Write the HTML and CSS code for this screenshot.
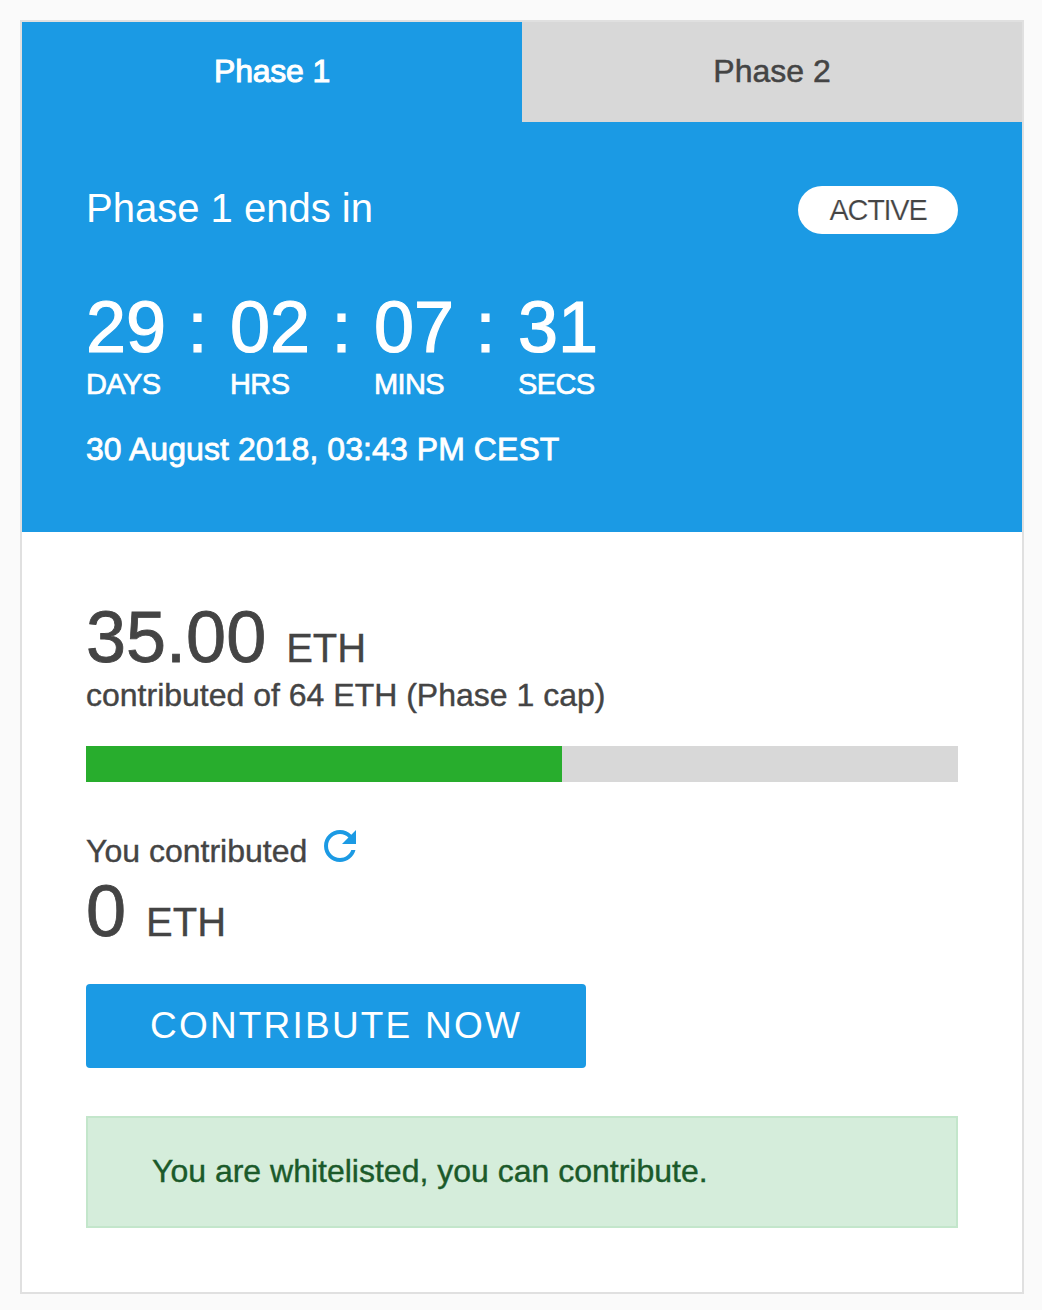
FILE: index.html
```html
<!DOCTYPE html>
<html lang="en">
<head>
  <meta charset="utf-8">
  <title>Contribution</title>
  <link rel="stylesheet" href="styles.css">
</head>
<body>
  <main class="card">
    <nav class="tabs">
      <a class="tab tab-active">Phase 1</a>
      <a class="tab">Phase 2</a>
    </nav>
    <section class="hero">
      <div class="hero-head">
        <h1 class="hero-title">Phase 1 ends in</h1>
        <span class="badge">ACTIVE</span>
      </div>
      <div class="countdown">
        <div class="unit"><div class="digits">29 :</div><div class="unit-label">DAYS</div></div>
        <div class="unit"><div class="digits">02 :</div><div class="unit-label">HRS</div></div>
        <div class="unit"><div class="digits">07 :</div><div class="unit-label">MINS</div></div>
        <div class="unit"><div class="digits">31</div><div class="unit-label">SECS</div></div>
      </div>
      <div class="date">30 August 2018, 03:43 PM CEST</div>
    </section>
    <section class="details">
      <div class="amount">35.00 <span class="currency">ETH</span></div>
      <div class="caption">contributed of 64 ETH (Phase 1 cap)</div>
      <div class="progress"><div class="progress-fill" style="width: 54.6%"></div></div>
      <div class="own">
        <span>You contributed</span>
        <svg class="refresh" viewBox="4 4 16 16" aria-hidden="true"><path d="M17.65 6.35C16.2 4.9 14.21 4 12 4c-4.42 0-7.99 3.58-7.99 8s3.57 8 7.99 8c3.73 0 6.84-2.55 7.73-6h-2.08c-.82 2.33-3.04 4-5.65 4-3.31 0-6-2.69-6-6s2.69-6 6-6c1.66 0 3.14.69 4.22 1.78L13 11h7V4l-2.35 2.35z"/></svg>
      </div>
      <div class="amount">0 <span class="currency">ETH</span></div>
      <button class="button">CONTRIBUTE NOW</button>
      <div class="alert">You are whitelisted, you can contribute.</div>
    </section>
  </main>
</body>
</html>
```
FILE: styles.css
```css
* {
  box-sizing: border-box;
}

body {
  margin: 0;
  padding: 20px 18px 16px 20px;
  background: #fafafa;
  color: #444;
  font: 32px/40px "Liberation Sans", Arial, sans-serif;
}

.card {
  height: 1274px;
  border: 2px solid #e0e0e0;
  background: #fff;
}

.tabs {
  display: flex;
}

.tab {
  flex: 1;
  height: 100px;
  padding-top: 29px;
  background: #d8d8d8;
  text-align: center;
  -webkit-text-stroke: 0.5px currentColor;
}

.tab-active {
  background: #1b9ae4;
  color: #fff;
  letter-spacing: -0.2px;
  -webkit-text-stroke-width: 1px;
}

.hero {
  height: 410px;
  padding: 64px 64px 0;
  background: #1b9ae4;
  color: #fff;
}

.hero-head {
  display: flex;
  justify-content: space-between;
  align-items: flex-start;
  height: 48px;
}

.hero-title {
  margin: 0;
  font-size: 40px;
  font-weight: 400;
  line-height: 44px;
}

.badge {
  width: 160px;
  border-radius: 24px;
  background: #fff;
  color: #444;
  font-size: 29px;
  line-height: 48px;
  letter-spacing: -1.3px;
  text-align: center;
  -webkit-text-stroke: 0.2px #fff;
}

.countdown {
  display: grid;
  grid-template-columns: repeat(4, 144px);
  margin-top: 57px;
}

.digits {
  font-size: 72px;
  line-height: 72px;
  word-spacing: 1.5px;
  -webkit-text-stroke: 1.2px currentColor;
}

.unit-label {
  font-size: 29px;
  line-height: 42px;
  letter-spacing: -0.6px;
  -webkit-text-stroke: 0.7px currentColor;
}

.date {
  margin-top: 24px;
  letter-spacing: 0.07px;
  -webkit-text-stroke: 0.8px currentColor;
}

.details {
  padding: 69px 64px 0;
}

.amount {
  font-size: 72px;
  line-height: 72px;
  -webkit-text-stroke: 0.8px currentColor;
}

.currency {
  font-size: 40px;
  line-height: 1;
  -webkit-text-stroke-width: 0.3px;
}

.caption,
.own,
.alert {
  -webkit-text-stroke: 0.4px currentColor;
}

.caption {
  margin-top: 2px;
}

.progress {
  height: 36px;
  margin-top: 31px;
  background: #d8d8d8;
}

.progress-fill {
  height: 100%;
  background: #28ad2d;
}

.own {
  display: flex;
  gap: 17px;
  margin: 49px 0 4px;
}

.refresh {
  width: 32px;
  height: 32px;
  margin-top: -1px;
  fill: #1b9ae4;
}

.button {
  display: block;
  width: 500px;
  height: 84px;
  margin: 37px 0 48px;
  padding: 0 0 0 64px;
  border: 0;
  border-radius: 4px;
  background: #1b9ae4;
  color: #fff;
  font: 37px/82px "Liberation Sans", Arial, sans-serif;
  letter-spacing: 2.2px;
  text-align: left;
  white-space: nowrap;
}

.alert {
  height: 112px;
  padding: 33px 64px;
  border: 2px solid #c3e6cb;
  background: #d5eddb;
  color: #1b5a2a;
}
```
